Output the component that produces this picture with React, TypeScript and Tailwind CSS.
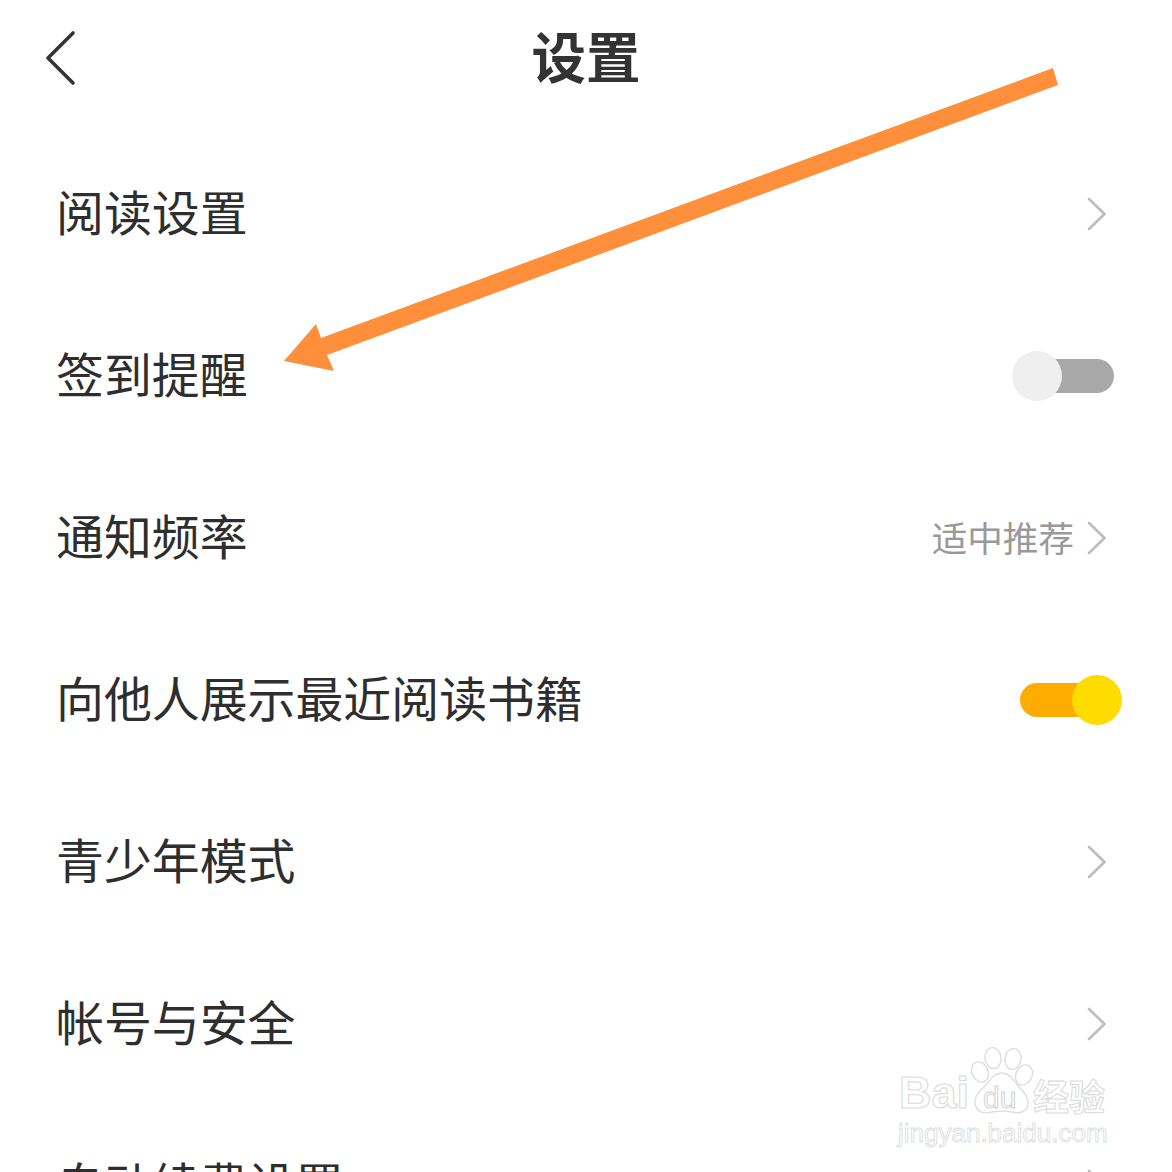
import { ReactNode } from "react";

const FONT = "font-['Noto_Sans_CJK_SC','Noto_Sans',sans-serif]";

function Chevron() {
  return (
    <svg width="22" height="36" viewBox="0 0 22 36" fill="none" className="mr-[6px] shrink-0">
      <path d="M3 3 L18.5 18 L3 33" stroke="#bdbdbd" strokeWidth="2.6" strokeLinecap="round" strokeLinejoin="round" />
    </svg>
  );
}

function Toggle({ on }: { on: boolean }) {
  if (on) {
    return (
      <div className="relative h-[34px] w-[94px] rounded-full bg-[#ffab00]">
        <div className="absolute right-[-8px] top-[-8px] h-[50px] w-[50px] rounded-full bg-[#ffdc00]" />
      </div>
    );
  }
  return (
    <div className="relative h-[34px] w-[94px] rounded-full bg-[#a8a8a8]">
      <div className="absolute left-[-8px] top-[-8px] h-[50px] w-[50px] rounded-full bg-[#efefef]" />
    </div>
  );
}

function Row({ label, right }: { label: string; right?: ReactNode }) {
  return (
    <div className="flex h-[162px] shrink-0 items-center justify-between pl-[56px] pr-[58px]">
      <span className="pb-[6px] text-[47.9px] leading-none text-[#2e2e2e]">{label}</span>
      {right}
    </div>
  );
}

function Watermark() {
  return (
    <div className="absolute left-[898px] top-[1046px] h-[104px] w-[214px]">
      <svg width="214" height="70" viewBox="0 0 214 70" fill="#fff" stroke="#dedede" strokeWidth="1.4" className="absolute left-0 top-0">
        <ellipse cx="95" cy="12" rx="8" ry="10.5" transform="rotate(-8 95 12)" />
        <ellipse cx="115" cy="13" rx="8" ry="10.5" transform="rotate(8 115 13)" />
        <ellipse cx="82" cy="26" rx="8" ry="10.5" transform="rotate(-25 82 26)" />
        <ellipse cx="126" cy="29" rx="8" ry="10.5" transform="rotate(25 126 29)" />
        <path d="M104 27 C95 27 91 36 86 41 C79 47 76 52 77 58 C79 67 87 68 94 66 C100 65 108 65 114 66 C122 68 129 66 130 58 C131 52 127 47 121 41 C116 36 113 27 104 27 Z" />
      </svg>
      <span className="absolute left-[1px] top-[22px] font-['Liberation_Sans',sans-serif] text-[45px] font-bold leading-[50px] text-transparent [-webkit-text-stroke:1.2px_#dcdcdc]">
        Bai
      </span>
      <span className="absolute left-[85px] top-[35px] font-['Liberation_Sans',sans-serif] text-[30px] leading-[34px] text-transparent [-webkit-text-stroke:1px_#d2d2d2]">
        du
      </span>
      <span className="absolute left-[135px] top-[31px] text-[36px] font-bold leading-[36px] text-transparent [-webkit-text-stroke:1.1px_#dcdcdc]">
        经验
      </span>
      <span className="absolute left-0 top-[73px] font-['Liberation_Sans',sans-serif] text-[26px] leading-[28px] text-transparent [-webkit-text-stroke:0.9px_#dedede]">
        jingyan.baidu.com
      </span>
    </div>
  );
}

export default function App() {
  return (
    <div className={`relative flex h-[1172px] w-[1172px] flex-col overflow-hidden bg-white ${FONT}`}>
      <div className="relative flex h-[117px] shrink-0 items-center justify-center">
        <svg width="34" height="58" viewBox="0 0 34 58" fill="none" className="absolute left-[44px] top-[30px]">
          <path d="M29 3 L4 28 L29 53" stroke="#333" strokeWidth="3.6" strokeLinecap="round" strokeLinejoin="round" />
        </svg>
        <h1 className="pb-[6px] text-[54.5px] font-bold leading-none text-[#333]">设置</h1>
      </div>
      <div className="flex flex-col pt-[16px]">
        <Row label="阅读设置" right={<Chevron />} />
        <Row label="签到提醒" right={<Toggle on={false} />} />
        <Row
          label="通知频率"
          right={
            <div className="flex items-center gap-[12px]">
              <span className="pb-[3px] text-[35.6px] leading-none text-[#999]">适中推荐</span>
              <Chevron />
            </div>
          }
        />
        <Row label="向他人展示最近阅读书籍" right={<Toggle on />} />
        <Row label="青少年模式" right={<Chevron />} />
        <Row label="帐号与安全" right={<Chevron />} />
        <Row label="自动续费设置" right={<Chevron />} />
      </div>

      {/* orange annotation arrow */}
      <svg width="1172" height="1172" viewBox="0 0 1172 1172" className="pointer-events-none absolute left-0 top-0">
        <path d="M1053 68 L1058 85 L327 355 L334 371 L284 361 L316 324 L321 338 Z" fill="#ff8f3a" />
      </svg>

      <Watermark />
    </div>
  );
}
